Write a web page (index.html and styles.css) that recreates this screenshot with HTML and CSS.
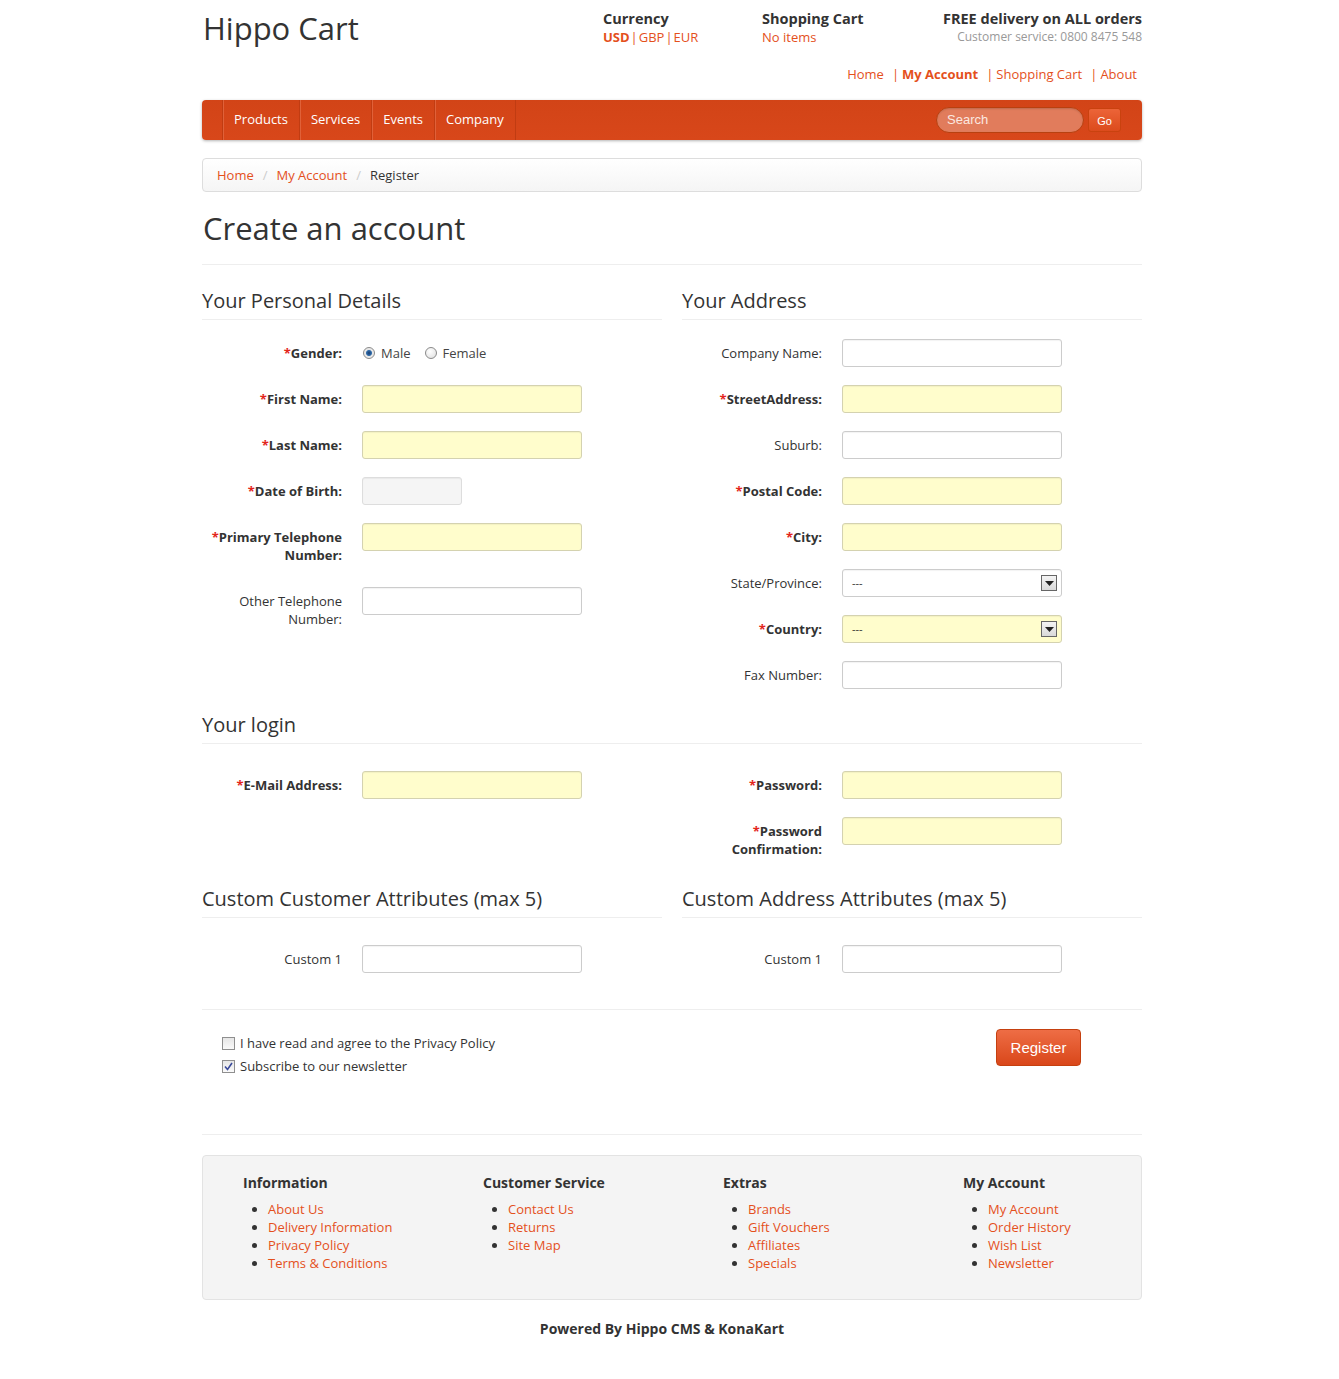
FILE: index.html
```html
<!DOCTYPE html>
<html lang="en">
<head>
<meta charset="utf-8">
<title>Hippo Cart - Create an account</title>
<link rel="stylesheet" href="styles.css">
</head>
<body>
<div class="page">
  <header class="top">
    <div class="logo">Hippo Cart</div>
    <div class="info currency">
      <div class="info-title">Currency</div>
      <div class="info-line"><a class="sel">USD</a><span class="pipe">|</span><a>GBP</a><span class="pipe">|</span><a>EUR</a></div>
    </div>
    <div class="info cart">
      <div class="info-title">Shopping Cart</div>
      <div class="info-line"><a>No items</a></div>
    </div>
    <div class="info delivery">
      <div class="info-title">FREE delivery on ALL orders</div>
      <div class="info-line grey">Customer service: 0800 8475 548</div>
    </div>
  </header>

  <nav class="toplinks">
    <a>Home</a><span class="pipe">|</span><a class="bold">My Account</a><span class="pipe">|</span><a>Shopping Cart</a><span class="pipe">|</span><a>About</a>
  </nav>

  <div class="bar">
    <ul class="menu">
      <li>Products</li>
      <li>Services</li>
      <li>Events</li>
      <li>Company</li>
    </ul>
    <div class="search">
      <div class="search-input">Search</div>
      <div class="go">Go</div>
    </div>
  </div>

  <div class="crumbs">
    <a>Home</a><span class="slash">/</span><a>My Account</a><span class="slash">/</span><span class="cur">Register</span>
  </div>

  <h1 class="title">Create an account</h1>
  <div class="rule"></div>

  <div class="cols">
    <div class="col">
      <h3 class="sec-head tight">Your Personal Details</h3>
      <div class="row">
        <div class="label req"><span class="star">*</span>Gender:</div>
        <div class="ctrl radios">
          <span class="radio on"></span><span class="rlabel">Male</span>
          <span class="radio"></span><span class="rlabel">Female</span>
        </div>
      </div>
      <div class="row">
        <div class="label req"><span class="star">*</span>First Name:</div>
        <div class="ctrl"><div class="input yellow"></div></div>
      </div>
      <div class="row">
        <div class="label req"><span class="star">*</span>Last Name:</div>
        <div class="ctrl"><div class="input yellow"></div></div>
      </div>
      <div class="row">
        <div class="label req"><span class="star">*</span>Date of Birth:</div>
        <div class="ctrl"><div class="input short"></div></div>
      </div>
      <div class="row">
        <div class="label req two"><div><span class="star">*</span>Primary Telephone</div><div>Number:</div></div>
        <div class="ctrl"><div class="input yellow"></div></div>
      </div>
      <div class="row">
        <div class="label two"><div>Other Telephone</div><div>Number:</div></div>
        <div class="ctrl"><div class="input"></div></div>
      </div>
    </div>
    <div class="col">
      <h3 class="sec-head tight">Your Address</h3>
      <div class="row">
        <div class="label">Company Name:</div>
        <div class="ctrl"><div class="input"></div></div>
      </div>
      <div class="row">
        <div class="label req"><span class="star">*</span>StreetAddress:</div>
        <div class="ctrl"><div class="input yellow"></div></div>
      </div>
      <div class="row">
        <div class="label">Suburb:</div>
        <div class="ctrl"><div class="input"></div></div>
      </div>
      <div class="row">
        <div class="label req"><span class="star">*</span>Postal Code:</div>
        <div class="ctrl"><div class="input yellow"></div></div>
      </div>
      <div class="row">
        <div class="label req"><span class="star">*</span>City:</div>
        <div class="ctrl"><div class="input yellow"></div></div>
      </div>
      <div class="row">
        <div class="label">State/Province:</div>
        <div class="ctrl"><div class="input select"><span class="opt">---</span><span class="arrow"><svg width="9" height="5" viewBox="0 0 9 5"><path d="M0 0H9L4.5 5Z" fill="#222"/></svg></span></div></div>
      </div>
      <div class="row">
        <div class="label req"><span class="star">*</span>Country:</div>
        <div class="ctrl"><div class="input select yellow"><span class="opt">---</span><span class="arrow"><svg width="9" height="5" viewBox="0 0 9 5"><path d="M0 0H9L4.5 5Z" fill="#222"/></svg></span></div></div>
      </div>
      <div class="row">
        <div class="label">Fax Number:</div>
        <div class="ctrl"><div class="input"></div></div>
      </div>
    </div>
  </div>

  <h3 class="sec-head full">Your login</h3>
  <div class="cols">
    <div class="col">
      <div class="row">
        <div class="label req"><span class="star">*</span>E-Mail Address:</div>
        <div class="ctrl"><div class="input yellow"></div></div>
      </div>
    </div>
    <div class="col">
      <div class="row">
        <div class="label req"><span class="star">*</span>Password:</div>
        <div class="ctrl"><div class="input yellow"></div></div>
      </div>
      <div class="row">
        <div class="label req two"><div><span class="star">*</span>Password</div><div>Confirmation:</div></div>
        <div class="ctrl"><div class="input yellow"></div></div>
      </div>
    </div>
  </div>

  <div class="cols">
    <div class="col">
      <h3 class="sec-head">Custom Customer Attributes (max 5)</h3>
      <div class="row">
        <div class="label">Custom 1</div>
        <div class="ctrl"><div class="input"></div></div>
      </div>
    </div>
    <div class="col">
      <h3 class="sec-head">Custom Address Attributes (max 5)</h3>
      <div class="row">
        <div class="label">Custom 1</div>
        <div class="ctrl"><div class="input"></div></div>
      </div>
    </div>
  </div>

  <div class="rule r2"></div>

  <div class="agree">
    <div class="checks">
      <div class="check-line"><span class="checkbox"></span>I have read and agree to the Privacy Policy</div>
      <div class="check-line"><span class="checkbox on"><svg width="9" height="9" viewBox="0 0 9 9"><path d="M1 4.5L3.5 7.5L8 1" fill="none" stroke="#3a4a9a" stroke-width="1.6"/></svg></span>Subscribe to our newsletter</div>
    </div>
    <div class="register">Register</div>
  </div>

  <div class="rule r3"></div>

  <footer class="foot">
    <div class="fcol">
      <h4>Information</h4>
      <ul>
        <li><a>About Us</a></li>
        <li><a>Delivery Information</a></li>
        <li><a>Privacy Policy</a></li>
        <li><a>Terms &amp; Conditions</a></li>
      </ul>
    </div>
    <div class="fcol">
      <h4>Customer Service</h4>
      <ul>
        <li><a>Contact Us</a></li>
        <li><a>Returns</a></li>
        <li><a>Site Map</a></li>
      </ul>
    </div>
    <div class="fcol">
      <h4>Extras</h4>
      <ul>
        <li><a>Brands</a></li>
        <li><a>Gift Vouchers</a></li>
        <li><a>Affiliates</a></li>
        <li><a>Specials</a></li>
      </ul>
    </div>
    <div class="fcol">
      <h4>My Account</h4>
      <ul>
        <li><a>My Account</a></li>
        <li><a>Order History</a></li>
        <li><a>Wish List</a></li>
        <li><a>Newsletter</a></li>
      </ul>
    </div>
  </footer>

  <div class="powered">Powered By Hippo CMS &amp; KonaKart</div>
</div>
</body>
</html>
```

FILE: styles.css
```css
* { box-sizing: border-box; }

body {
  margin: 0;
  padding: 0 0 0 5px;
  background: #fff;
  color: #333;
  font-family: "Open Sans", "Noto Sans", "Liberation Sans", sans-serif;
  font-size: 13px;
  line-height: 18px;
}

a { color: #e4501c; text-decoration: none; }

.page {
  width: 940px;
  margin: 0 auto;
  padding-bottom: 40px;
}

/* header */
.top {
  display: flex;
  padding-top: 10px;
}
.logo {
  width: 401px;
  font-size: 31px;
  line-height: 38px;
  margin-top: -1px;
  color: #333;
  padding-left: 1px;
}
.info-title { font-weight: bold; font-size: 14.5px; color: #333; }
.info-line { font-size: 13px; }
.currency { width: 159px; }
.cart { flex: 1; }
.delivery { text-align: right; }
.sel { font-weight: bold; }
.pipe { color: #e4501c; }
.currency .pipe { margin: 0 1px; }
.grey { color: #999; font-size: 12px; }

.toplinks {
  margin-top: 18px;
  text-align: right;
  padding-right: 5px;
  font-size: 13px;
}
.toplinks .pipe { margin: 0 3px 0 8px; }
.toplinks .bold { font-weight: bold; }

/* bar */
.bar {
  margin-top: 17px;
  height: 40px;
  background: linear-gradient(#d24417, #d8471a);
  border-radius: 4px;
  box-shadow: 0 1px 3px rgba(0,0,0,0.3);
  display: flex;
  justify-content: space-between;
  align-items: center;
}
.menu {
  list-style: none;
  margin: 0;
  padding: 0 0 0 20px;
  display: flex;
  height: 40px;
}
.menu li {
  color: #fff;
  line-height: 39px;
  padding: 0 11px;
  border-left: 1px solid #c13c12;
  box-shadow: inset 1px 0 0 #e06139;
}
.menu li:last-child { border-right: 1px solid #c13c12; }
.search {
  display: flex;
  align-items: center;
  gap: 4px;
  padding-right: 21px;
}
.search-input {
  width: 148px;
  height: 26px;
  border-radius: 13px;
  background: #e17c5c;
  border: 1px solid #b8400f;
  box-shadow: inset 0 1px 2px rgba(0,0,0,0.15);
  color: #fbe8e0;
  font-family: "Liberation Sans", Arial, sans-serif;
  font-size: 13px;
  line-height: 23px;
  padding-left: 10px;
}
.go {
  width: 33px;
  height: 24px;
  border-radius: 3px;
  background: linear-gradient(#ec6438, #dc4b1c);
  border: 1px solid #c9420f;
  color: #fff;
  font-family: "Liberation Sans", Arial, sans-serif;
  font-size: 11px;
  line-height: 24px;
  text-align: center;
}

/* breadcrumb */
.crumbs {
  margin-top: 18px;
  height: 34px;
  border: 1px solid #ddd;
  border-radius: 4px;
  background: linear-gradient(#fff, #f5f5f5);
  padding: 0 14px;
  line-height: 32px;
}
.crumbs .slash { color: #ccc; padding: 0 9px; }
.crumbs .cur { color: #333; }

.title {
  margin: 16px 0 0;
  font-size: 31px;
  line-height: 40px;
  font-weight: normal;
  color: #333;
  padding-left: 1px;
}

.rule { height: 1px; background: #eee; margin-top: 16px; }
.r2 { margin-top: 18px; }
.r3 { margin-top: 56px; }

/* form columns */
.cols {
  display: grid;
  grid-template-columns: 460px 460px;
  column-gap: 20px;
}
.rule + .cols { margin-top: 22px; }

.sec-head {
  margin: 4px 0 27px;
  font-size: 20px;
  font-weight: normal;
  line-height: 28px;
  padding-bottom: 4px;
  border-bottom: 1px solid #eee;
  color: #333;
}
.sec-head.tight { margin-top: 0; margin-bottom: 19px; }

.row {
  display: flex;
  margin-bottom: 18px;
}
.label {
  width: 140px;
  text-align: right;
  padding: 5px 0 5px;
  line-height: 18px;
  min-height: 28px;
  color: #333;
}
.label.req { font-weight: bold; }
.label.two { min-height: 46px; }
.star { color: #e3251c; }
.ctrl { margin-left: 20px; }

.input {
  width: 220px;
  height: 28px;
  border: 1px solid #ccc;
  border-radius: 3px;
  background: #fff;
  box-shadow: inset 0 1px 1px rgba(0,0,0,0.05);
}
.input.yellow { background: #fffdcc; border-color: #d4d2b0; }
.input.short { width: 100px; background: #f5f5f5; border-color: #ddd; }
.input.select {
  display: flex;
  justify-content: space-between;
  align-items: center;
  padding: 0 4px 0 9px;
}
.opt { font-size: 11px; color: #333; }
.arrow {
  width: 16px;
  height: 16px;
  border: 1px solid #666;
  background: linear-gradient(#f4f4f4, #d9d9d9);
  display: flex;
  align-items: center;
  justify-content: center;
}

.radios {
  display: flex;
  align-items: center;
  height: 28px;
}
.radio {
  width: 12px;
  height: 12px;
  border-radius: 50%;
  border: 1px solid #8a8a8a;
  background: radial-gradient(circle at 40% 35%, #fff, #ddd);
  margin-right: 6px;
  margin-left: 1px;
  display: inline-block;
}
.radio.on {
  background: radial-gradient(circle, #1a3c6e 0, #2e6aa8 2.5px, #e6e6e6 3.5px, #f4f4f4 100%);
}
.rlabel { margin-right: 13px; color: #444; }

/* agree */
.agree {
  display: flex;
  justify-content: space-between;
  padding: 22px 61px 0 20px;
}
.check-line {
  display: flex;
  align-items: center;
  line-height: 23px;
  color: #333;
}
.checkbox {
  width: 13px;
  height: 13px;
  border: 1px solid #8f8f8f;
  background: linear-gradient(#e6e6e6, #fafafa);
  margin-right: 5px;
  display: inline-flex;
  align-items: center;
  justify-content: center;
}
.register {
  margin-top: -3px;
  width: 85px;
  height: 37px;
  border-radius: 4px;
  background: linear-gradient(#ee6d45, #d9471a);
  border: 1px solid #c5400f;
  color: #fff;
  font-family: "Liberation Sans", Arial, sans-serif;
  font-size: 15px;
  line-height: 35px;
  text-align: center;
}

/* footer */
.foot {
  margin-top: 20px;
  background: #f4f4f4;
  border: 1px solid #e3e3e3;
  border-radius: 4px;
  display: grid;
  grid-template-columns: repeat(4, 240px);
  padding: 17px 0 27px 40px;
}
.foot h4 {
  margin: 0 0 7px;
  font-size: 14px;
  line-height: 20px;
  font-weight: bold;
  color: #333;
}
.foot ul {
  margin: 0;
  padding-left: 25px;
  list-style: disc;
}
.foot li { line-height: 18px; color: #333; }

.powered {
  margin-top: 20px;
  text-align: center;
  font-weight: bold;
  font-size: 14px;
  padding-right: 20px;
}
```
